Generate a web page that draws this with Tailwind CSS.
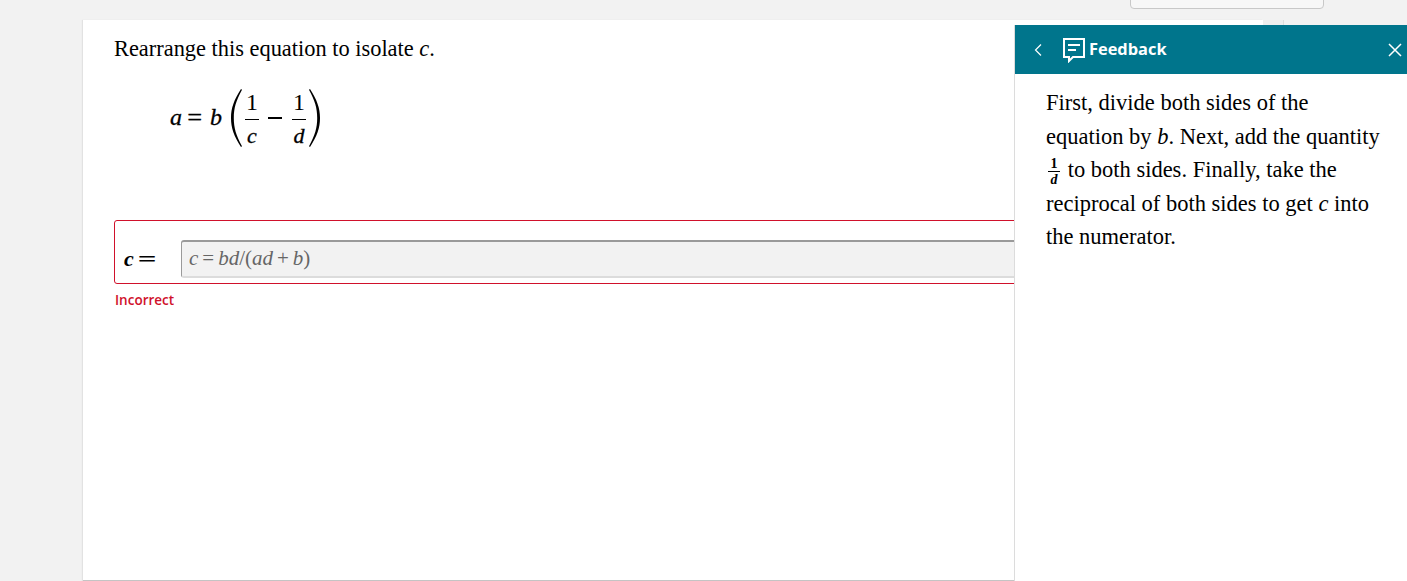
<!DOCTYPE html>
<html lang="en">
<head>
  <meta charset="UTF-8">
  <title>Feedback</title>
  <script src="https://cdn.jsdelivr.net/npm/@tailwindcss/browser@4"></script>
</head>
<body class="bg-[#f2f2f2] h-[581px] overflow-hidden relative font-['Liberation_Serif',serif] text-black">
  <!-- top bar leftovers -->
  <div class="h-[20px] relative">
    <div class="absolute left-[1130px] top-[-10px] w-[194px] h-[19px] bg-[#f7f7f7] border border-[#c8c8c8] rounded-[4px]"></div>
  </div>

  <div class="flex">
    <div class="ml-[83px] w-[1180px] h-[561px] bg-white border-b border-[#c4c4c4] shadow-[-1px_0_1px_#e2e2e2] pl-[31px]">
      <p class="text-[22.4px] leading-[28px] mt-[15px]">Rearrange this equation to isolate <i>c</i>.</p>

      <!-- equation -->
      <div class="flex items-center ml-[56px] mt-[24px] h-[62px] text-[24px] leading-none">
        <span class="flex -mt-[2px] [-webkit-text-stroke:0.3px_#000]"><i class="w-[12px]">a</i><span class="ml-[6px] w-[14px] inline-block scale-x-110">=</span><i class="ml-[8px] w-[13px]">b</i></span>
        <svg class="ml-[5px]" width="15" height="60" viewBox="0 0 15 60"><path d="M13 1C6 12 3 20 3 30s3 18 10 29l1-.8C8 47 5.800 40 5.800 30S8 13 14 1.800z" fill="#000"/></svg>
        <span class="flex flex-col items-center w-[14px] ml-[2px]">
          <span class="pb-[5px]">1</span><span class="h-px w-full bg-black"></span><i class="pt-[5px] text-[22px] leading-none [-webkit-text-stroke:0.3px_#000]">c</i>
        </span>
        <span class="ml-[9px] w-[14px] h-[1.5px] bg-black"></span>
        <span class="flex flex-col items-center w-[14px] ml-[10px]">
          <span class="pb-[5px]">1</span><span class="h-px w-full bg-black"></span><i class="pt-[5px] text-[22px] leading-none [-webkit-text-stroke:0.3px_#000]">d</i>
        </span>
        <svg class="ml-[2px]" width="15" height="60" viewBox="0 0 15 60"><path d="M2 1c7 11 10 19 10 29S9 48 2 59l-1-.8C7 47 9.200 40 9.200 30S7 13 1 1.800z" fill="#000"/></svg>
      </div>

      <!-- answer box -->
      <div class="mt-[71px] w-[1149px] h-[64px] border border-[#d0112b] rounded-[3px] flex items-center pl-[9px] pt-[16px] pb-[2px]">
        <span class="w-[57px] text-[22px] font-bold leading-none -mt-[1px]"><i>c</i><span class="ml-[7px] inline-block scale-x-150">=</span></span>
        <div class="flex-1 h-[38px] bg-[#f2f2f2] border-y-2 border-l border-t-[#9a9a9a] border-l-[#9a9a9a] border-b-[#dcdcdc] rounded-[3px] pl-[7px] flex items-center text-[21px] text-[#666]">
          <span><i>c</i><span class="mx-[4px]">=</span><i>bd</i>/(<i>ad</i><span class="mx-[4px]">+</span><i>b</i>)</span>
        </div>
      </div>
      <p class="font-['Open_Sans',sans-serif] font-semibold text-[13.5px] leading-[18px] text-[#d0112b] mt-[7px] ml-px">Incorrect</p>
    </div>
    <div class="w-[21px] h-[5px] bg-[#eeeeee] border-r border-[#dddddd]"></div>
  </div>

  <!-- feedback panel -->
  <aside class="absolute left-[1014px] top-[25px] right-0 bottom-0 bg-white border-l border-[#dcdcdc]">
    <header class="h-[49px] bg-[#00758c] text-white flex items-center relative">
      <svg class="ml-[18px]" width="10" height="14" viewBox="0 0 10 14" fill="none" stroke="#fff" stroke-width="1.200"><path d="M8 1.500 2.500 7 8 12.500"/></svg>
      <svg class="ml-[19px]" width="24" height="26" viewBox="0 0 24 26" fill="none" stroke="#fff" stroke-width="2"><path d="M2 2h20v18H11l-4 4v-4H2z"/><path d="M6 8h12M6 13h8"/></svg>
      <span class="ml-[3px] font-['Open_Sans',sans-serif] font-bold text-[16.4px]">Feedback</span>
      <svg class="absolute right-[5px] top-[18px]" width="14" height="14" viewBox="0 0 14 14" fill="none" stroke="#fff" stroke-width="1.500"><path d="M1 1l12 12M13 1 1 13"/></svg>
    </header>
    <div class="pl-[31px] pr-[20px] pt-[12px] text-[22.5px] leading-[33.5px]">
      First, divide both sides of the equation by <i>b</i>. Next, add the quantity
      <span class="inline-flex flex-col items-center align-middle w-[12px] mx-[2px] my-[-8px] text-[14px] leading-[15px] font-bold"><span>1</span><span class="h-px w-full bg-black"></span><i>d</i></span>
      to both sides. Finally, take the reciprocal of both sides to get <i>c</i> into the numerator.
    </div>
  </aside>
</body>
</html>
